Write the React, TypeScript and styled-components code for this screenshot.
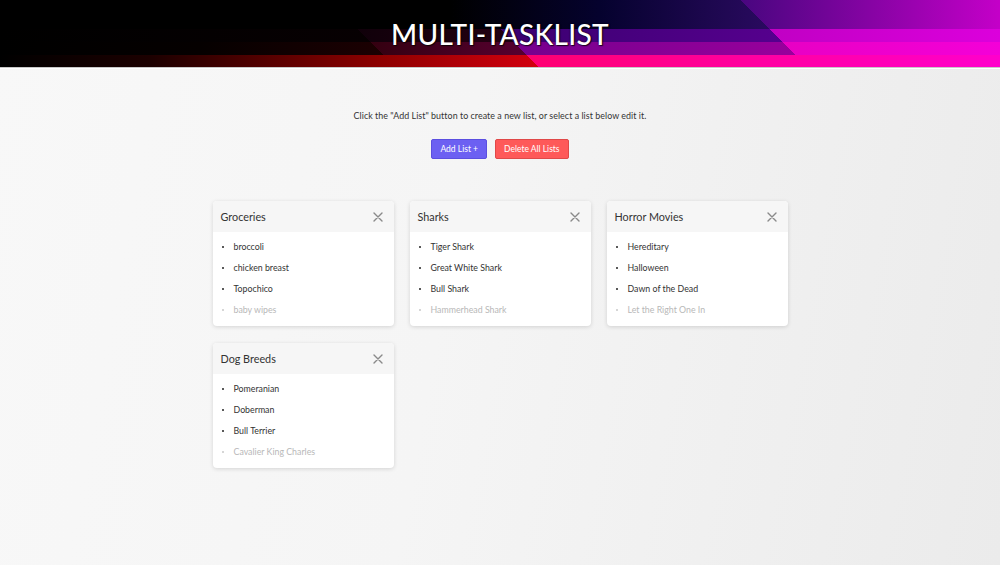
import React from "react";
import styled, { createGlobalStyle } from "styled-components";

const GlobalStyle = createGlobalStyle`
  html, body { margin: 0; padding: 0; }
  body {
    min-height: 100vh;
    background: linear-gradient(100deg, #f8f8f8 0%, #f5f5f5 45%, #ebebeb 100%);
    font-family: "Lato", "Liberation Sans", sans-serif;
    color: #333;
  }
  #root { min-height: 100vh; }
`;

const Header = styled.header`
  position: relative;
  height: 67px;
  display: flex;
  align-items: center;
  justify-content: center;
  border-bottom: 1px solid #c8c8c8;
  box-shadow: 0 1px 0 #fff;
  overflow: hidden;
`;

const HeaderArt = styled.svg`
  position: absolute;
  inset: 0;
  width: 100%;
  height: 100%;
`;

const Title = styled.h1`
  position: relative;
  margin: 0;
  font-family: "Lato", "Liberation Sans", sans-serif;
  font-weight: 500;
  font-size: 28px;
  letter-spacing: 0.3px;
  color: #fff;
  text-shadow: 0 0 2px rgba(0, 0, 0, 0.9), 1px 1px 1px rgba(0, 0, 0, 0.7);
`;

const Main = styled.main`
  display: flex;
  flex-direction: column;
  align-items: center;
`;

const Intro = styled.p`
  margin: 42px 0 0;
  font-size: 8.9px;
  line-height: 12px;
  letter-spacing: 0.05px;
  color: #333;
`;

const ButtonRow = styled.div`
  display: flex;
  gap: 8px;
  margin-top: 17px;
`;

const Button = styled.button<{ $variant: "add" | "delete" }>`
  height: 20px;
  padding: 0 8px;
  border-radius: 2px;
  border: 1px solid ${(p) => (p.$variant === "add" ? "#5b4fe0" : "#e04848")};
  background: ${(p) => (p.$variant === "add" ? "#6c60f2" : "#fe5959")};
  color: #fff;
  font-family: "Lato", "Liberation Sans", sans-serif;
  font-size: 8.5px;
  cursor: pointer;
`;

const Grid = styled.div`
  display: grid;
  grid-template-columns: repeat(3, 181px);
  column-gap: 16px;
  row-gap: 17px;
  margin-top: 42px;
`;

const Card = styled.section`
  background: #fff;
  border-radius: 4px;
  box-shadow: 0 1px 4px rgba(0, 0, 0, 0.14);
  overflow: hidden;
`;

const CardHeader = styled.div`
  height: 31px;
  background: #f6f6f6;
  display: flex;
  align-items: center;
  justify-content: space-between;
  padding: 0 11px 0 8px;
`;

const CardTitle = styled.h2`
  margin: 0;
  font-size: 10.8px;
  font-weight: 400;
  color: #333;
`;

const CloseButton = styled.button`
  border: 0;
  padding: 0;
  background: none;
  width: 10px;
  height: 10px;
  display: flex;
  cursor: pointer;
`;

const ItemList = styled.ul`
  list-style: none;
  margin: 0;
  padding: 4px 0 6px;
`;

const Item = styled.li<{ $faded?: boolean }>`
  position: relative;
  height: 21px;
  line-height: 21px;
  padding-left: 21px;
  font-size: 8.8px;
  color: ${(p) => (p.$faded ? "#b8b8b8" : "#333")};
  &::before {
    content: "";
    position: absolute;
    left: 9px;
    top: 10px;
    width: 2px;
    height: 2px;
    border-radius: 1px;
    background: ${(p) => (p.$faded ? "#c8c8c8" : "#222")};
  }
`;

const lists = [
  { title: "Groceries", items: ["broccoli", "chicken breast", "Topochico"], placeholder: "baby wipes" },
  { title: "Sharks", items: ["Tiger Shark", "Great White Shark", "Bull Shark"], placeholder: "Hammerhead Shark" },
  { title: "Horror Movies", items: ["Hereditary", "Halloween", "Dawn of the Dead"], placeholder: "Let the Right One In" },
  { title: "Dog Breeds", items: ["Pomeranian", "Doberman", "Bull Terrier"], placeholder: "Cavalier King Charles" },
];

const CloseIcon = () => (
  <svg width="10" height="10" viewBox="0 0 10 10">
    <path d="M1 1 L9 9 M9 1 L1 9" stroke="#8a8a8a" strokeWidth="1.4" strokeLinecap="round" />
  </svg>
);

type Stop = [number, string];
const grad = (id: string, stops: Stop[]) => (
  <linearGradient id={id} gradientUnits="userSpaceOnUse" x1="0" y1="0" x2="1000" y2="0">
    {stops.map(([o, c], i) => (
      <stop key={i} offset={o / 1000} stopColor={c} />
    ))}
  </linearGradient>
);

const HeaderBackground = () => (
  <HeaderArt viewBox="0 0 1000 67" preserveAspectRatio="none" shapeRendering="crispEdges">
    <defs>
      {grad("b1l", [[0, "#000"], [450, "#000"], [600, "#05022e"], [770, "#2a0a60"]])}
      {grad("b1r", [[740, "#48067f"], [1000, "#c400c8"]])}
      {grad("b2a", [[0, "#000"], [370, "#070002"]])}
      {grad("b2b", [[357, "#10000a"], [513, "#240012"]])}
      {grad("b2c", [[500, "#3a0070"], [782, "#56008e"]])}
      {grad("b2d", [[769, "#c000c4"], [1000, "#dc00dc"]])}
      {grad("b3a", [[0, "#000"], [200, "#050000"], [383, "#1c0002"]])}
      {grad("b3b", [[370, "#340010"], [526, "#560030"]])}
      {grad("b3c", [[513, "#76008e"], [795, "#98009c"]])}
      {grad("b3d", [[782, "#e800c4"], [1000, "#f400d8"]])}
      {grad("b4a", [[0, "#000"], [150, "#1c0000"], [380, "#8e0000"], [538, "#d2000e"]])}
      {grad("b4b", [[526, "#ff0070"], [750, "#ff00a0"], [1000, "#ff00cc"]])}
    </defs>
    <polygon points="0,0 740,0 769,29 0,29" fill="url(#b1l)" />
    <polygon points="740,0 1000,0 1000,29 769,29" fill="url(#b1r)" />
    <polygon points="0,29 357,29 370,42 0,42" fill="url(#b2a)" />
    <polygon points="357,29 500,29 513,42 370,42" fill="url(#b2b)" />
    <polygon points="500,29 769,29 782,42 513,42" fill="url(#b2c)" />
    <polygon points="769,29 1000,29 1000,42 782,42" fill="url(#b2d)" />
    <polygon points="0,42 370,42 383,55 0,55" fill="url(#b3a)" />
    <polygon points="370,42 513,42 526,55 383,55" fill="url(#b3b)" />
    <polygon points="513,42 782,42 795,55 526,55" fill="url(#b3c)" />
    <polygon points="782,42 1000,42 1000,55 795,55" fill="url(#b3d)" />
    <polygon points="0,55 526,55 538,67 0,67" fill="url(#b4a)" />
    <polygon points="526,55 1000,55 1000,67 538,67" fill="url(#b4b)" />
  </HeaderArt>
);

export default function App() {
  return (
    <>
      <GlobalStyle />
      <Header>
        <HeaderBackground />
        <Title>MULTI-TASKLIST</Title>
      </Header>
      <Main>
        <Intro>Click the "Add List" button to create a new list, or select a list below edit it.</Intro>
        <ButtonRow>
          <Button $variant="add">Add List +</Button>
          <Button $variant="delete">Delete All Lists</Button>
        </ButtonRow>
        <Grid>
          {lists.map((l) => (
            <Card key={l.title}>
              <CardHeader>
                <CardTitle>{l.title}</CardTitle>
                <CloseButton aria-label="Delete list">
                  <CloseIcon />
                </CloseButton>
              </CardHeader>
              <ItemList>
                {l.items.map((it) => (
                  <Item key={it}>{it}</Item>
                ))}
                <Item $faded>{l.placeholder}</Item>
              </ItemList>
            </Card>
          ))}
        </Grid>
      </Main>
    </>
  );
}
